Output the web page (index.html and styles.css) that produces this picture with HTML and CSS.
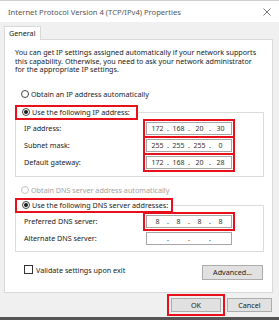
FILE: index.html
```html
<!DOCTYPE html>
<html lang="en">
<head>
    <meta charset="UTF-8">
    <meta name="viewport" content="width=device-width, initial-scale=1.0">
    <title>Internet Protocol Version 4 (TCP/IPv4) Properties</title>
    <link rel="stylesheet" href="styles.css">
</head>
<body>
    <div class="dialog">
        <div class="titlebar">
            <span class="title">Internet Protocol Version 4 (TCP/IPv4) Properties</span>
            <svg class="close" width="8" height="8" viewBox="0 0 8 8">
                <path d="M0.5 0.5 L7.5 7.5 M7.5 0.5 L0.5 7.5" stroke="#555" stroke-width="0.8" fill="none"/>
            </svg>
        </div>

        <div class="content">
            <div class="tabs">
                <div class="tab">General</div>
            </div>

            <div class="panel">
                <p class="intro">You can get IP settings assigned automatically if your network supports<br>this capability. Otherwise, you need to ask your network administrator<br>for the appropriate IP settings.</p>

                <label class="radio first"><span class="dot"></span>Obtain an IP address automatically</label>

                <fieldset class="group ip-group">
                    <legend><label class="radio mark"><span class="dot on"></span>Use the following IP address:</label></legend>
                    <div class="row">
                        <span>IP address:</span>
                        <div class="ip mark"><span>172</span><i>.</i><span>168</span><i>.</i><span>20</span><i>.</i><span>30</span></div>
                    </div>
                    <div class="row">
                        <span>Subnet mask:</span>
                        <div class="ip mark"><span>255</span><i>.</i><span>255</span><i>.</i><span>255</span><i>.</i><span>0</span></div>
                    </div>
                    <div class="row">
                        <span>Default gateway:</span>
                        <div class="ip mark"><span>172</span><i>.</i><span>168</span><i>.</i><span>20</span><i>.</i><span>28</span></div>
                    </div>
                </fieldset>

                <label class="radio disabled"><span class="dot"></span>Obtain DNS server address automatically</label>

                <fieldset class="group dns-group">
                    <legend><label class="radio mark"><span class="dot on"></span>Use the following DNS server addresses:</label></legend>
                    <div class="row">
                        <span>Preferred DNS server:</span>
                        <div class="ip mark"><span>8</span><i>.</i><span>8</span><i>.</i><span>8</span><i>.</i><span>8</span></div>
                    </div>
                    <div class="row">
                        <span>Alternate DNS server:</span>
                        <div class="ip"><span></span><i>.</i><span></span><i>.</i><span></span><i>.</i><span></span></div>
                    </div>
                </fieldset>

                <div class="panel-foot">
                    <label class="check"><span class="box"></span>Validate settings upon exit</label>
                    <button class="btn advanced">Advanced...</button>
                </div>
            </div>

            <div class="actions">
                <button class="btn mark">OK</button>
                <button class="btn">Cancel</button>
            </div>
        </div>
        <div class="taskbar"></div>
    </div>
</body>
</html>
```

FILE: styles.css
```css
* {
    box-sizing: border-box;
}

body {
    margin: 0;
    font-family: "Noto Sans", "Open Sans", sans-serif;
    font-size: 7.2px;
    color: #1b1b1b;
    background-color: #f0f0f0;
}

.dialog {
    width: 279px;
    height: 320px;
    display: flex;
    flex-direction: column;
    background-color: #f0f0f0;
}

.titlebar {
    height: 22px;
    background-color: white;
    border-top: 1px solid #cfcfcf;
    display: flex;
    align-items: center;
    justify-content: space-between;
    padding: 0 8px 0 8px;
}

.title {
    color: #555;
    font-size: 7.6px;
}

.content {
    flex: 1;
    padding: 0 6px 0 4px;
}

.tabs {
    display: flex;
    padding-top: 4px;
}

.tab {
    width: 37px;
    height: 14px;
    background-color: white;
    border: 1px solid #d9d9d9;
    border-bottom: none;
    padding-left: 4px;
    line-height: 13px;
    margin-bottom: -1px;
    position: relative;
}

.panel {
    height: 254px;
    background-color: white;
    border: 1px solid #d9d9d9;
    padding: 0 8px 0 10px;
}

.intro {
    margin: 8px 0 0 0;
    line-height: 8.6px;
    white-space: nowrap;
}

.radio {
    display: flex;
    align-items: center;
    height: 11px;
    padding-left: 6px;
    white-space: nowrap;
}

.radio.first {
    margin-top: 15px;
}

.radio.disabled {
    color: #a3a3a3;
    margin-top: 8px;
}

.dot {
    width: 8px;
    height: 8px;
    border: 1px solid #444;
    border-radius: 50%;
    margin-right: 2px;
    display: flex;
    align-items: center;
    justify-content: center;
}

.disabled .dot {
    border-color: #c4c4c4;
}

.dot.on::after {
    content: "";
    width: 4px;
    height: 4px;
    border-radius: 50%;
    background-color: #1b1b1b;
}

.mark {
    outline: 2px solid #e8101a;
    outline-offset: 0;
}

.group {
    margin: 7px 0 0 0;
    width: 249px;
    border: 1px solid #dcdcdc;
    padding: 2px 0 5px 8px;
}

.group legend {
    padding: 0;
    margin-left: -7px;
}

.group legend .radio {
    padding-left: 5px;
    padding-right: 6px;
}

.dns-group {
    margin-top: 4px;
    padding-bottom: 4px;
}

.dns-group legend .radio {
    padding-right: 3px;
}

.row {
    height: 17px;
    display: flex;
    align-items: center;
    justify-content: space-between;
    padding-right: 31px;
}

.ip {
    width: 86px;
    height: 13px;
    border: 1px solid #a6a6a6;
    display: grid;
    grid-template-columns: 1fr 0 1fr 0 1fr 0 1fr;
    align-items: center;
    font-size: 7px;
    color: #333;
    outline-offset: 1px;
}

.ip span {
    text-align: center;
}

.ip i {
    font-style: normal;
    display: flex;
    justify-content: center;
    width: 0;
}

.panel-foot {
    display: flex;
    justify-content: space-between;
    align-items: flex-start;
    margin-top: 13px;
}

.check {
    display: flex;
    align-items: center;
    padding-left: 9px;
}

.box {
    width: 9px;
    height: 9px;
    border: 1px solid #333;
    margin-right: 3px;
}

.btn {
    font-family: inherit;
    font-size: 7.2px;
    color: #1b1b1b;
    background-color: #e1e1e1;
    border: 1px solid #adadad;
    height: 15px;
    padding: 0;
}

.advanced {
    width: 61px;
    margin-right: 1px;
}

.actions {
    display: flex;
    justify-content: flex-end;
    gap: 6px;
    margin-top: 5px;
    padding-right: 1px;
}

.actions .btn {
    width: 50px;
    height: 14px;
}

.actions .btn:last-child {
    width: 45px;
}

.actions .mark {
    outline-offset: 2px;
}

.taskbar {
    height: 3px;
    background-color: #555;
}
```
